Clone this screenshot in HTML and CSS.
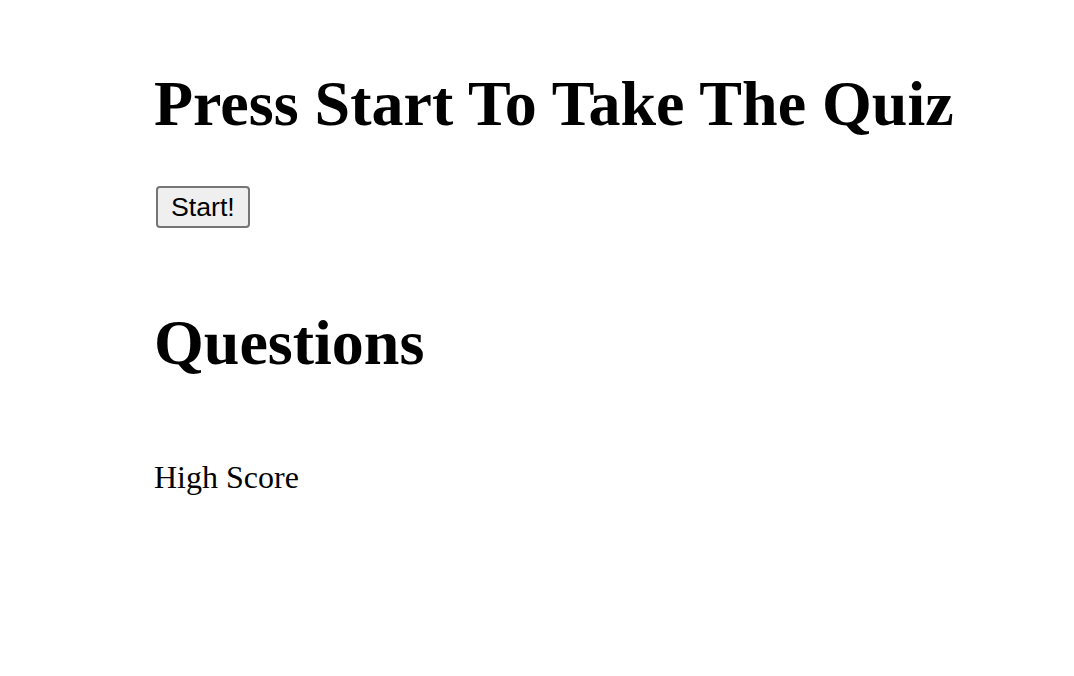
FILE: index.html
```html
<!DOCTYPE html>
<html lang="en">
<head>
<meta charset="utf-8">
<title>Quiz</title>
<link rel="stylesheet" href="styles.css">
</head>
<body>
<main class="page">
  <h1 class="title">Press Start To Take The Quiz</h1>
  <button class="start-btn" type="button">Start!</button>
  <h1 class="title questions">Questions</h1>
  <div class="high-score">High Score</div>
</main>
</body>
</html>
```

FILE: styles.css
```css
html, body {
  margin: 0;
  padding: 0;
  background: #ffffff;
}

body {
  font-family: "Liberation Serif", "Times New Roman", serif;
  color: #000000;
}

.page {
  display: flex;
  flex-direction: column;
  align-items: flex-start;
  padding: 67px 0 0 154px;
}

.title {
  margin: 0;
  font-size: 64px;
  line-height: 74px;
  font-weight: bold;
}

.start-btn {
  margin: 45px 0 0 2px;
  height: 42px;
  padding: 0 13px;
  font-family: "Liberation Sans", Arial, sans-serif;
  font-size: 26.67px;
  color: #000000;
  background: #efefef;
  border: 2px solid #767676;
  border-radius: 4px;
}

.questions {
  margin-top: 78px;
}

.high-score {
  margin-top: 79px;
  font-size: 32px;
  line-height: 37px;
}
```
